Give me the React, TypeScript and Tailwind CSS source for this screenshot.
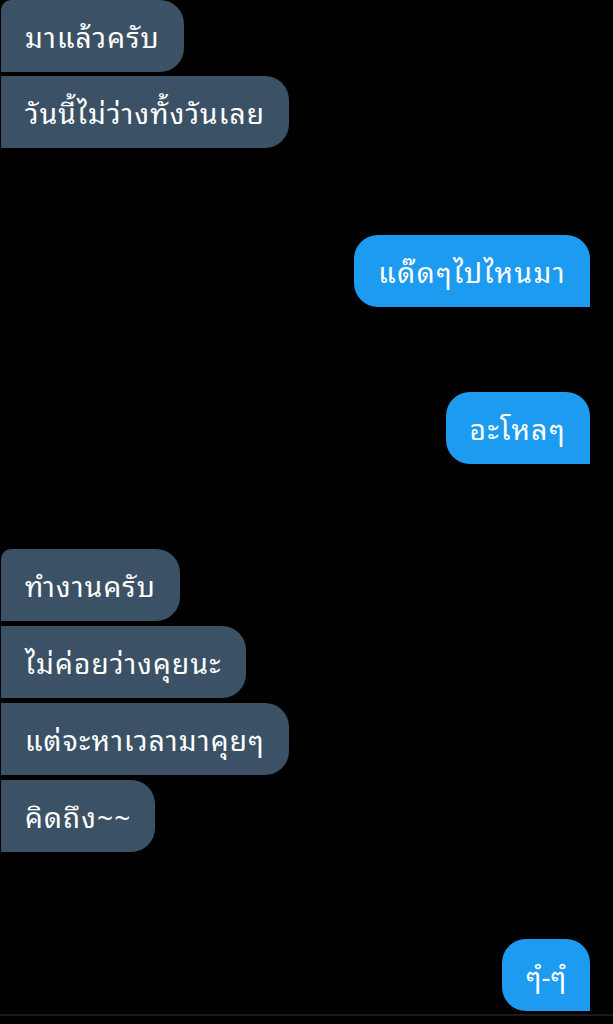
import React from 'react';

const font = { fontFamily: '"Noto Sans Thai Looped", "Noto Sans Thai", Loma, Garuda, "Noto Sans", sans-serif' };

function Left({ text, first }: { text: string; first?: boolean }) {
  return (
    <div
      className={`ml-px flex h-[72px] w-fit items-center rounded-r-[24px] bg-[#3b5165] px-6 text-[28px] tracking-[1.2px] text-white ${first ? 'rounded-tl-[10px]' : ''}`}
    >
      {text}
    </div>
  );
}

function Right({ text, tight }: { text: string; tight?: boolean }) {
  return (
    <div
      className={`mr-[23px] flex h-[72px] w-fit items-center self-end rounded-l-[24px] rounded-tr-[24px] bg-[#1d9bf0] px-6 text-[28px] text-white ${tight ? 'tracking-normal' : 'tracking-[1.5px]'}`}
    >
      {text}
    </div>
  );
}

export default function App() {
  return (
    <div className="flex h-[1024px] w-[613px] flex-col overflow-hidden bg-black" style={font}>
      <div className="flex flex-col gap-1">
        <Left text="มาแล้วครับ" first />
        <Left text="วันนี้ไม่ว่างทั้งวันเลย" />
      </div>
      <div className="mt-[87px] flex flex-col">
        <Right text="แด๊ดๆไปไหนมา" />
      </div>
      <div className="mt-[85px] flex flex-col">
        <Right text="อะโหลๆ" />
      </div>
      <div className="mt-[85px] flex flex-col gap-[5px]">
        <Left text="ทำงานครับ" first />
        <Left text="ไม่ค่อยว่างคุยนะ" />
        <Left text="แต่จะหาเวลามาคุยๆ" />
        <Left text="คิดถึง~~" />
      </div>
      <div className="mt-[87px] flex flex-col">
        <Right text="ๆํ-ๆํ" tight />
      </div>
      <div className="mt-[3px] h-[2px] w-full bg-[#1c1c1c]" />
    </div>
  );
}
